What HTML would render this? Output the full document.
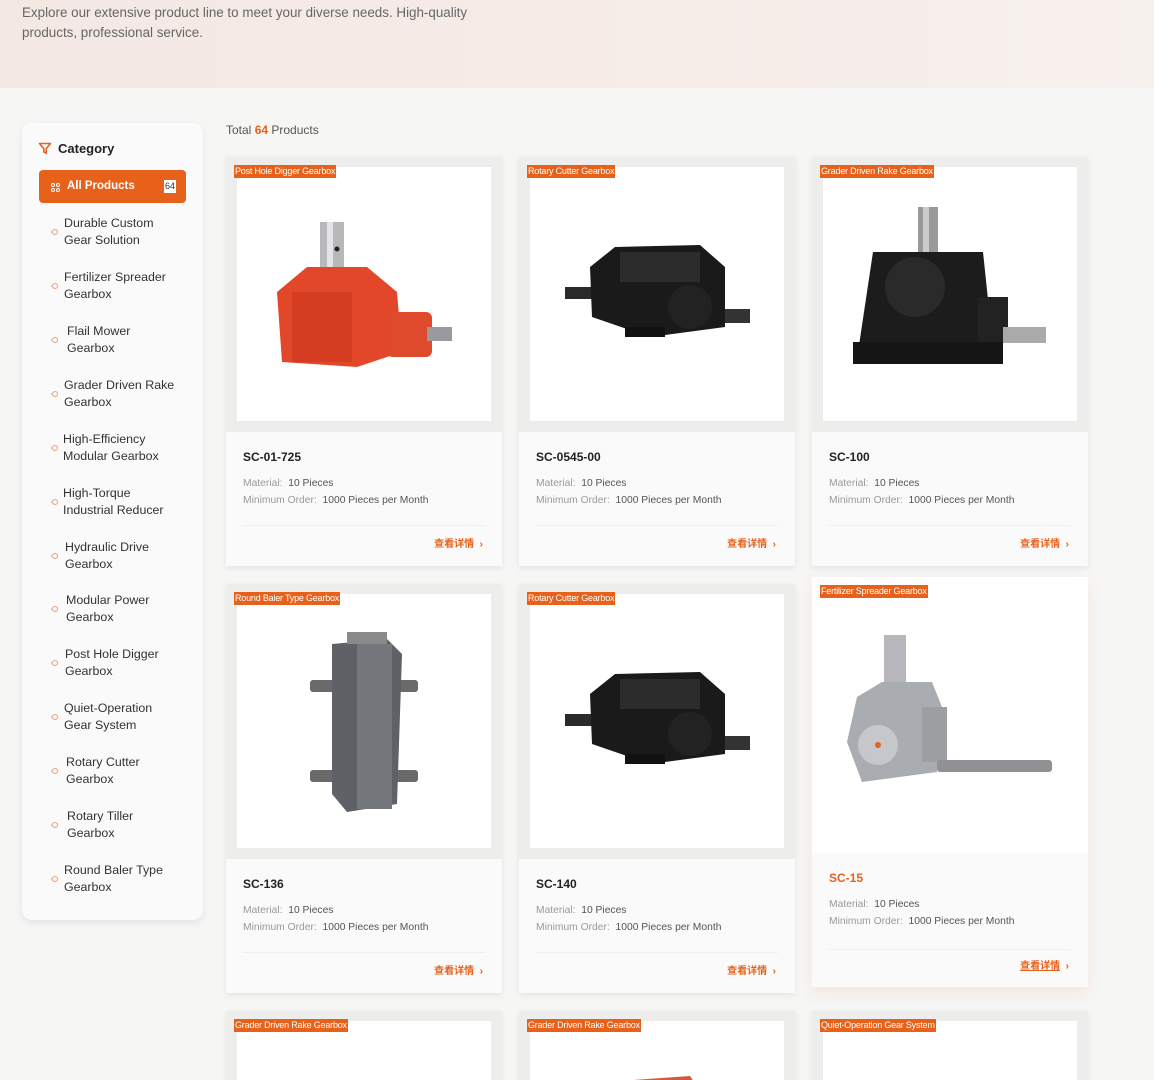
<!DOCTYPE html>
<html><head><meta charset="utf-8">
<style>
*{margin:0;padding:0;box-sizing:border-box}
html{width:1154px;height:1080px;overflow:hidden}
body{width:1154px;height:1080px;overflow:hidden;background:#f6f6f5;font-family:"Liberation Sans","Noto Sans CJK SC",sans-serif;position:relative}
.hero{position:absolute;left:0;top:0;width:1154px;height:88px;background:linear-gradient(90deg,#f4e8e3,#f6ece8 60%,#f7f1ee)}
.hero p{position:absolute;left:22px;top:3px;font-size:13.4px;line-height:20px;color:#666;width:490px}
.side{position:absolute;left:22px;top:123px;width:181px;height:797px;background:#fafafa;border-radius:10px;box-shadow:0 3px 8px rgba(0,0,0,.08)}
.cat{position:absolute;left:37px;top:141px;font-size:13px;font-weight:bold;color:#222}
.allbtn{position:absolute;left:39px;top:170px;width:147px;height:33px;background:#e7611b;border-radius:4px;color:#fff;font-size:11.5px;font-weight:bold}
.allbtn span.t{position:absolute;left:28px;top:10px}
.allbtn .cnt{position:absolute;left:125px;top:10px;background:#fff;color:#333;font-size:9px;font-weight:normal;padding:1px 1px;line-height:11px}
.item{position:absolute;font-size:12.4px;line-height:17px;color:#333}
.item i{position:absolute;left:-12px;top:14px;width:6px;height:6px;border:1px solid #e8a27c;border-radius:1px 50% 50% 50%;transform:rotate(-45deg)}
.total{position:absolute;left:226px;top:123px;font-size:12px;color:#555}
.total b{color:#e7611b}
.card{position:absolute;width:276px;height:409px;background:#fafafa;box-shadow:0 2px 6px rgba(0,0,0,.08);overflow:hidden}
.card .img{position:absolute;left:0;top:0;width:276px;height:275px;background:#ededec}
.card .in{position:absolute;left:11px;top:10px;width:254px;height:254px;background:#fff;overflow:hidden}
.card .tag{position:absolute;left:8px;top:8px;background:#e7611b;color:#fff;font-size:9px;line-height:13px;padding:0 1px;letter-spacing:-.2px;z-index:2}
.card h3{position:absolute;left:17px;top:293px;font-size:12px;color:#222;font-weight:bold}
.card .m{position:absolute;left:17px;font-size:10.3px;color:#999}
.card .m b{font-weight:normal;color:#555}
.card .ln{position:absolute;left:17px;right:17px;top:368px;border-top:1px solid #f0f0f0}
.card .lk{position:absolute;right:19px;top:378px;font-size:10px;color:#e7611b;font-weight:bold}
.card.hv{background:#fafafa;box-shadow:0 6px 14px rgba(231,97,27,.10)}
.card.hv .img{background:#fff}
.card.hv h3{color:#e7611b}
.card.hv .lk u{text-decoration:underline}
.card.r3{height:69px}
</style></head><body>
<div class="hero"><p>Explore our extensive product line to meet your diverse needs. High-quality products, professional service.</p></div>

<div class="side"></div>
<svg style="position:absolute;left:38px;top:142px" width="14" height="13" viewBox="0 0 14 13"><path d="M1.5 1.5h11l-4.3 5.3v4.5l-2.4-1.4V6.8z" fill="none" stroke="#e7611b" stroke-width="1.6" stroke-linejoin="round"/></svg>
<div class="cat" style="left:58px">Category</div>
<div class="allbtn"><svg style="position:absolute;left:12px;top:13px" width="9" height="9" viewBox="0 0 9 9" fill="none" stroke="#fff" stroke-width="1"><circle cx="2" cy="2" r="1.5"/><circle cx="7" cy="2" r="1.5"/><circle cx="2" cy="7" r="1.5"/><circle cx="7" cy="7" r="1.5"/></svg><span class="t">All Products</span><span class="cnt">64</span></div>

<div class="item" style="left:64px;top:215px"><i></i>Durable Custom<br>Gear Solution</div>
<div class="item" style="left:64px;top:269px"><i></i>Fertilizer Spreader<br>Gearbox</div>
<div class="item" style="left:67px;top:323px"><i style="left:-15px"></i>Flail Mower<br>Gearbox</div>
<div class="item" style="left:64px;top:377px"><i></i>Grader Driven Rake<br>Gearbox</div>
<div class="item" style="left:63px;top:431px"><i style="left:-11px"></i>High-Efficiency<br>Modular Gearbox</div>
<div class="item" style="left:63px;top:485px"><i style="left:-11px"></i>High-Torque<br>Industrial Reducer</div>
<div class="item" style="left:65px;top:539px"><i style="left:-13px"></i>Hydraulic Drive<br>Gearbox</div>
<div class="item" style="left:66px;top:592px"><i style="left:-14px"></i>Modular Power<br>Gearbox</div>
<div class="item" style="left:65px;top:646px"><i style="left:-13px"></i>Post Hole Digger<br>Gearbox</div>
<div class="item" style="left:64px;top:700px"><i></i>Quiet-Operation<br>Gear System</div>
<div class="item" style="left:66px;top:754px"><i style="left:-14px"></i>Rotary Cutter<br>Gearbox</div>
<div class="item" style="left:67px;top:808px"><i style="left:-15px"></i>Rotary Tiller<br>Gearbox</div>
<div class="item" style="left:64px;top:862px"><i></i>Round Baler Type<br>Gearbox</div>

<div class="total">Total <b>64</b> Products</div>

<!-- Row 1 -->
<div class="card" style="left:226px;top:157px"><div class="img"><div class="in">
<svg width="254" height="254"><rect x="83" y="55" width="24" height="70" fill="#b8b8bb"/><rect x="90" y="55" width="6" height="70" fill="#e4e4e6"/><circle cx="100" cy="82" r="2.5" fill="#222"/>
<path d="M40 125 L70 100 L130 100 L160 125 L165 185 L120 200 L45 195 Z" fill="#e2472a"/><rect x="55" y="125" width="60" height="70" fill="#d43d22"/>
<rect x="150" y="145" width="45" height="45" rx="6" fill="#e04a2c"/><rect x="190" y="160" width="25" height="14" fill="#9a9a9e"/></svg>
</div></div><span class="tag">Post Hole Digger Gearbox</span>
<h3>SC-01-725</h3><div class="m" style="top:321px">Material:&nbsp; <b>10 Pieces</b></div><div class="m" style="top:338px">Minimum Order:&nbsp; <b>1000 Pieces per Month</b></div><div class="ln"></div><div class="lk">查看详情 &nbsp;›</div></div>

<div class="card" style="left:519px;top:157px"><div class="img"><div class="in">
<svg width="254" height="254"><rect x="35" y="120" width="30" height="12" fill="#2a2a2a"/><rect x="170" y="142" width="50" height="14" fill="#333"/>
<path d="M60 100 L85 80 L170 78 L195 100 L195 160 L120 170 L62 150 Z" fill="#1a1a1a"/><rect x="90" y="85" width="80" height="30" fill="#2c2c2c"/><circle cx="160" cy="140" r="22" fill="#222"/><rect x="95" y="160" width="40" height="10" fill="#111"/></svg>
</div></div><span class="tag">Rotary Cutter Gearbox</span>
<h3>SC-0545-00</h3><div class="m" style="top:321px">Material:&nbsp; <b>10 Pieces</b></div><div class="m" style="top:338px">Minimum Order:&nbsp; <b>1000 Pieces per Month</b></div><div class="ln"></div><div class="lk">查看详情 &nbsp;›</div></div>

<div class="card" style="left:812px;top:157px"><div class="img"><div class="in">
<svg width="254" height="254"><rect x="95" y="40" width="20" height="45" fill="#999"/><rect x="100" y="40" width="6" height="45" fill="#ccc"/>
<path d="M50 85 L160 85 L170 180 L35 185 Z" fill="#1c1c1c"/><circle cx="92" cy="120" r="30" fill="#2a2a2a"/><rect x="30" y="175" width="150" height="22" fill="#151515"/>
<rect x="155" y="130" width="30" height="45" fill="#222"/><rect x="180" y="160" width="43" height="16" fill="#aaa"/></svg>
</div></div><span class="tag">Grader Driven Rake Gearbox</span>
<h3>SC-100</h3><div class="m" style="top:321px">Material:&nbsp; <b>10 Pieces</b></div><div class="m" style="top:338px">Minimum Order:&nbsp; <b>1000 Pieces per Month</b></div><div class="ln"></div><div class="lk">查看详情 &nbsp;›</div></div>

<!-- Row 2 -->
<div class="card" style="left:226px;top:584px"><div class="img"><div class="in">
<svg width="254" height="254"><rect x="73" y="86" width="108" height="12" rx="3" fill="#6a6a6a"/><rect x="73" y="176" width="108" height="12" rx="3" fill="#6a6a6a"/>
<path d="M95 50 L150 45 L165 60 L160 210 L110 218 L95 200 Z" fill="#5e6166"/><rect x="120" y="50" width="35" height="165" fill="#74777c"/><rect x="110" y="38" width="40" height="12" fill="#8a8a8a"/></svg>
</div></div><span class="tag">Round Baler Type Gearbox</span>
<h3>SC-136</h3><div class="m" style="top:321px">Material:&nbsp; <b>10 Pieces</b></div><div class="m" style="top:338px">Minimum Order:&nbsp; <b>1000 Pieces per Month</b></div><div class="ln"></div><div class="lk">查看详情 &nbsp;›</div></div>

<div class="card" style="left:519px;top:584px"><div class="img"><div class="in">
<svg width="254" height="254"><rect x="35" y="120" width="30" height="12" fill="#2a2a2a"/><rect x="170" y="142" width="50" height="14" fill="#333"/>
<path d="M60 100 L85 80 L170 78 L195 100 L195 160 L120 170 L62 150 Z" fill="#1a1a1a"/><rect x="90" y="85" width="80" height="30" fill="#2c2c2c"/><circle cx="160" cy="140" r="22" fill="#222"/><rect x="95" y="160" width="40" height="10" fill="#111"/></svg>
</div></div><span class="tag">Rotary Cutter Gearbox</span>
<h3>SC-140</h3><div class="m" style="top:321px">Material:&nbsp; <b>10 Pieces</b></div><div class="m" style="top:338px">Minimum Order:&nbsp; <b>1000 Pieces per Month</b></div><div class="ln"></div><div class="lk">查看详情 &nbsp;›</div></div>

<div class="card hv" style="left:812px;top:577px;height:410px"><div class="img" style="height:276px">
<svg width="276" height="276" style="position:absolute;left:0;top:0"><rect x="72" y="58" width="22" height="50" fill="#b8b8bc"/><path d="M45 120 L70 105 L120 105 L130 130 L125 195 L50 205 L35 165 Z" fill="#a9acb0"/><circle cx="66" cy="168" r="20" fill="#c5c7ca"/><rect x="110" y="130" width="25" height="55" fill="#9c9ea2"/><rect x="125" y="183" width="115" height="12" rx="3" fill="#8f9195"/><circle cx="66" cy="168" r="3" fill="#e7611b"/></svg>
</div><span class="tag">Fertilizer Spreader Gearbox</span>
<h3 style="top:294px">SC-15</h3><div class="m" style="top:322px">Material:&nbsp; <b>10 Pieces</b></div><div class="m" style="top:339px">Minimum Order:&nbsp; <b>1000 Pieces per Month</b></div><div class="ln" style="top:372px"></div><div class="lk" style="top:380px"><u>查看详情</u> &nbsp;›</div></div>

<!-- Row 3 -->
<div class="card r3" style="left:226px;top:1011px"><div class="img"><div class="in"></div></div><span class="tag">Grader Driven Rake Gearbox</span></div>
<div class="card r3" style="left:519px;top:1011px"><div class="img"><div class="in"><svg width="254" height="254"><path d="M90 60 L160 55 L170 70 L85 75 Z" fill="#d45a3a"/><path d="M90 62 L120 60 L118 70 L88 72 Z" fill="#6b7fa8"/></svg></div></div><span class="tag">Grader Driven Rake Gearbox</span></div>
<div class="card r3" style="left:812px;top:1011px"><div class="img"><div class="in"></div></div><span class="tag">Quiet-Operation Gear System</span></div>
</body></html>
